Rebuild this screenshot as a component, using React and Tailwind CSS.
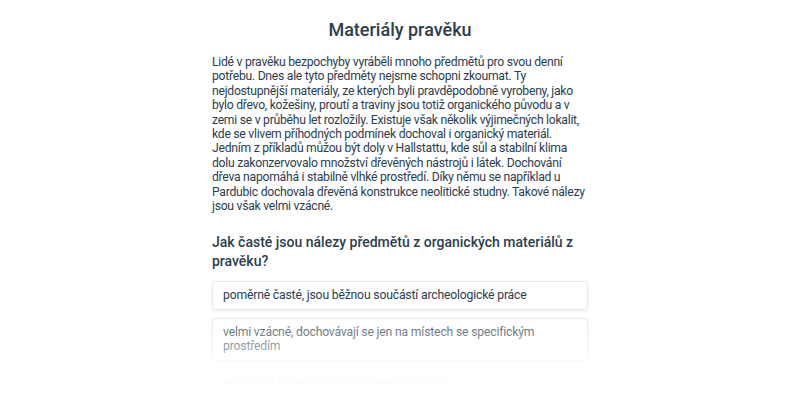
export default function App() {
  return (
    <div className="relative w-[800px] h-[400px] overflow-hidden bg-white text-[#2c3e50]" style={{ fontFamily: 'Roboto, "Noto Sans", sans-serif' }}>
      <div className="mx-auto w-[376px] pt-[18px]">
        <h1 className="text-center text-[18px] leading-[24px] font-medium">Materiály pravěku</h1>
        <p className="mt-[13px] mr-[-3px] text-[12.2px] leading-[14.4px] tracking-[-0.27px]">
          Lidé v pravěku bezpochyby vyráběli mnoho předmětů pro svou denní potřebu. Dnes ale tyto předměty nejsme schopni zkoumat. Ty nejdostupnější materiály, ze kterých byli pravděpodobně vyrobeny, jako bylo dřevo, kožešiny, proutí a traviny jsou totiž organického původu a v zemi se v průběhu let rozložily. Existuje však několik výjimečných lokalit, kde se vlivem příhodných podmínek dochoval i organický materiál. Jedním z příkladů můžou být doly v Hallstattu, kde sůl a stabilní klima dolu zakonzervovalo množství dřevěných nástrojů i látek. Dochování dřeva napomáhá i stabilně vlhké prostředí. Díky němu se například u Pardubic dochovala dřevěná konstrukce neolitické studny. Takové nálezy jsou však velmi vzácné.
        </p>
        <h2 className="mt-[20px] text-[14px] leading-[19px] font-medium">Jak časté jsou nálezy předmětů z organických materiálů z pravěku?</h2>
        <div className="mt-[10px] flex flex-col gap-[8px]">
          <div className="rounded-[4px] border border-[#e5e7eb] shadow-[0_1px_3px_rgba(0,0,0,0.08)] px-[10px] py-[6px] text-[12.2px] leading-[14.4px] tracking-[-0.18px]">poměrně časté, jsou běžnou součástí archeologické práce</div>
          <div className="rounded-[4px] border border-[#e5e7eb] shadow-[0_1px_3px_rgba(0,0,0,0.08)] px-[10px] py-[6px] text-[12.2px] leading-[14.4px] tracking-[-0.18px]">velmi vzácné, dochovávají se jen na místech se specifickým prostředím</div>
          <div className="rounded-[4px] border border-[#e5e7eb] shadow-[0_1px_3px_rgba(0,0,0,0.08)] px-[10px] py-[6px] text-[12.2px] leading-[14.4px] tracking-[-0.18px]">organické materiály se nikdy nedochovávají</div>
        </div>
      </div>
      <div className="absolute left-0 right-0 top-[300px] bottom-0 bg-[linear-gradient(to_bottom,rgba(255,255,255,0)_0%,rgba(255,255,255,0.3)_30%,rgba(255,255,255,0.6)_55%,rgba(255,255,255,0.95)_75%,#fff_88%)]"></div>
    </div>
  );
}
